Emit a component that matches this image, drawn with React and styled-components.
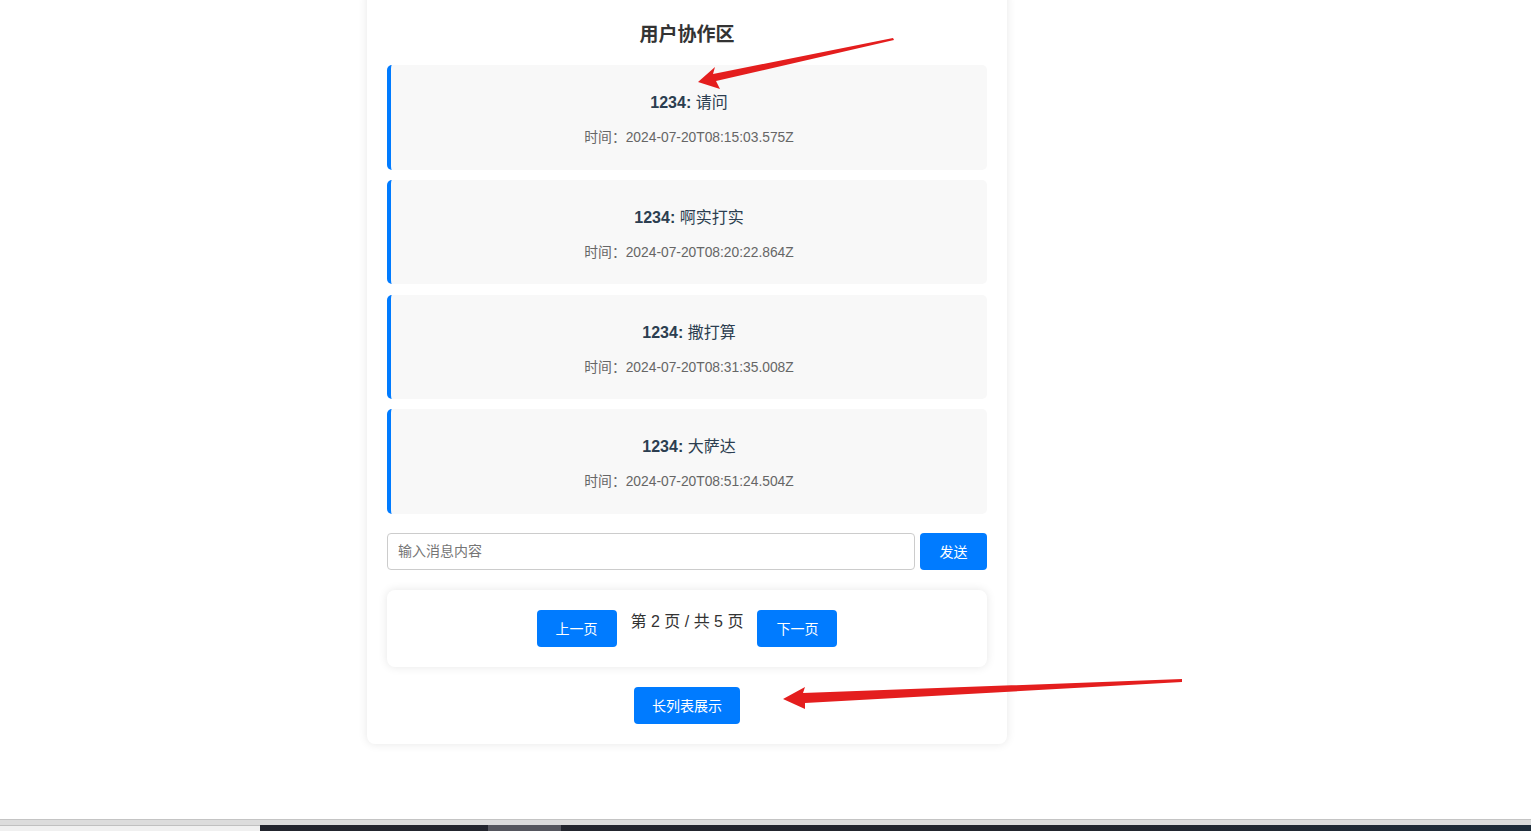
import styled, { createGlobalStyle } from 'styled-components'

const GlobalStyle = createGlobalStyle`
  html, body {
    margin: 0;
    padding: 0;
    background: #fff;
    font-family: "Liberation Sans", Arial, "Noto Sans CJK SC", sans-serif;
  }
`

const Screen = styled.div`
  position: relative;
  height: 831px;
  display: flex;
  flex-direction: column;
  overflow: hidden;
`

const Viewport = styled.div`
  flex: 1;
  overflow: hidden;
  display: flex;
  padding-left: 367px;
`

const Card = styled.div`
  width: 600px;
  margin-top: -10px;
  padding: 20px;
  align-self: flex-start;
  background: #fff;
  border-radius: 8px;
  box-shadow: 0 0 10px rgba(0, 0, 0, 0.1);
`

const Title = styled.h2`
  margin: 13px 0 18px;
  font-size: 19px;
  line-height: 24px;
  text-align: center;
  color: #333;
  font-weight: bold;
`

const Message = styled.div`
  background: #f8f8f8;
  border-left: 4px solid #007bff;
  border-radius: 5px;
  padding: 10px;
  margin-bottom: 10.25px;
  text-align: center;
  height: 84.5px;
`

const MsgLine = styled.p`
  margin: 17px 0 0;
  font-size: 16px;
  line-height: 22px;
  color: #2c3e50;
  b {
    font-weight: bold;
  }
`

const TimeLine = styled.p`
  margin: 15px 0 0;
  font-size: 13.8px;
  line-height: 18px;
  color: #666;
`

const InputRow = styled.div`
  display: flex;
  gap: 5px;
  margin-top: 19px;
`

const TextInput = styled.input`
  flex: 1;
  height: 37px;
  box-sizing: border-box;
  padding: 0 10px;
  border: 1px solid #ccc;
  border-radius: 4px;
  font-size: 14px;
  font-family: inherit;
  &::placeholder {
    color: #757575;
  }
`

const BlueButton = styled.button`
  height: 37px;
  width: ${p => p.$w}px;
  background: #007bff;
  color: #fff;
  border: none;
  border-radius: 4px;
  font-size: 14px;
  font-family: inherit;
  cursor: pointer;
  flex-shrink: 0;
`

const Pager = styled.div`
  margin-top: 20px;
  padding: 20px;
  background: #fff;
  border-radius: 8px;
  box-shadow: 0 0 10px rgba(0, 0, 0, 0.1);
  display: flex;
  justify-content: center;
  align-items: flex-start;
  gap: 14px;
`

const PageText = styled.span`
  margin-top: 1px;
  font-size: 16px;
  line-height: 22px;
  color: #333;
`

const Center = styled.div`
  display: flex;
  justify-content: center;
  margin-top: 20px;
`

const Chrome = styled.div`
  height: 12px;
  display: flex;
  flex-direction: column;
  flex-shrink: 0;
`

const ChromeEdge = styled.div`
  height: 6px;
  background: #dcdcdc;
  border-top: 1px solid #c4c4c4;
  box-sizing: border-box;
`

const Taskbar = styled.div`
  flex: 1;
  display: flex;
  background: linear-gradient(90deg, #23252e 0%, #22252d 70%, #1e2c3a 100%);
`

const TaskItem = styled.div`
  width: ${p => p.$w}px;
  margin-left: ${p => p.$ml || 0}px;
  background: ${p => p.$bg};
  border-top: ${p => (p.$light ? '1px solid #c0c0c0' : 'none')};
  box-sizing: border-box;
`

const Overlay = styled.svg`
  position: absolute;
  left: 0;
  top: 0;
  pointer-events: none;
`

const messages = [
  { user: '1234', text: '请问', time: '2024-07-20T08:15:03.575Z' },
  { user: '1234', text: '啊实打实', time: '2024-07-20T08:20:22.864Z' },
  { user: '1234', text: '撒打算', time: '2024-07-20T08:31:35.008Z' },
  { user: '1234', text: '大萨达', time: '2024-07-20T08:51:24.504Z' },
]

function Arrows() {
  return (
    <Overlay width="1531" height="831" viewBox="0 0 1531 831">
      <polygon
        fill="#e41e1e"
        points="893,38 894,40 716,81 720,89 698,82 715,67 713,74"
      />
      <polygon
        fill="#e41e1e"
        points="1182,679 1182,682 805,703 805,709 783,699 805,687 803,693"
      />
    </Overlay>
  )
}

export default function App() {
  return (
    <>
      <GlobalStyle />
      <Screen>
        <Viewport>
          <Card>
            <Title>用户协作区</Title>
            {messages.map((m, i) => (
              <Message key={i}>
                <MsgLine>
                  <b>{m.user}:</b> {m.text}
                </MsgLine>
                <TimeLine>时间：{m.time}</TimeLine>
              </Message>
            ))}
            <InputRow>
              <TextInput placeholder="输入消息内容" />
              <BlueButton $w={67}>发送</BlueButton>
            </InputRow>
            <Pager>
              <BlueButton $w={80}>上一页</BlueButton>
              <PageText>第 2 页 / 共 5 页</PageText>
              <BlueButton $w={80}>下一页</BlueButton>
            </Pager>
            <Center>
              <BlueButton $w={106}>长列表展示</BlueButton>
            </Center>
          </Card>
        </Viewport>
        <Chrome>
          <ChromeEdge />
          <Taskbar>
            <TaskItem $w={260} $bg="#f0f0f0" $light />
            <TaskItem $w={73} $ml={228} $bg="#55565e" />
          </Taskbar>
        </Chrome>
        <Arrows />
      </Screen>
    </>
  )
}
